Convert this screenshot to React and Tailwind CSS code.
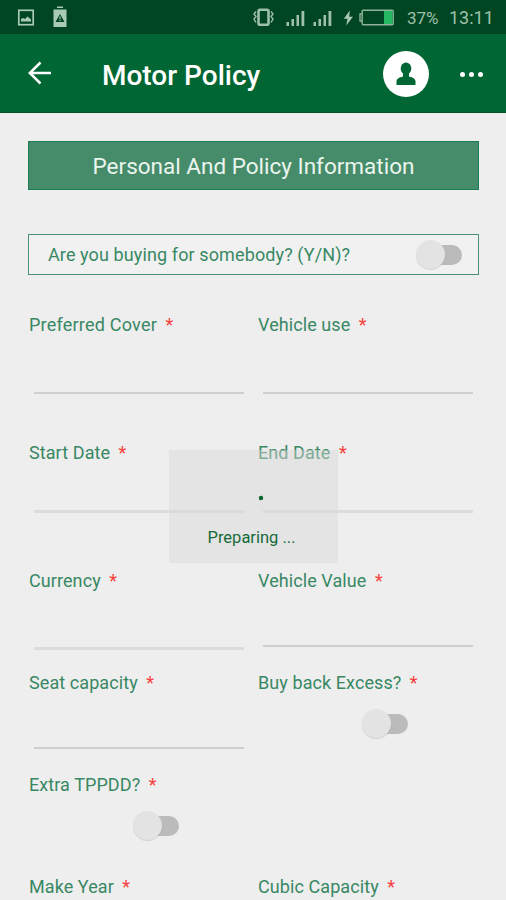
import React from "react";

const rows = [
  {
    height: "h-[128px]",
    fields: [
      { label: "Preferred Cover", tracking: "tracking-[0.22px]", line: "mt-[57px] h-[2px] bg-[#cfcfcf]" },
      { label: "Vehicle use", line: "mt-[57px] h-[2px] bg-[#d0d0d0]" },
    ],
  },
  {
    height: "h-[128px]",
    fields: [
      { label: "Start Date", line: "mt-[47px] h-[3px] bg-[#dcdcdc]" },
      { label: "End Date", line: "mt-[47px] h-[3px] bg-[#dcdcdc]" },
    ],
  },
  {
    height: "h-[102px]",
    fields: [
      { label: "Currency", line: "mt-[56px] h-[3px] bg-[#dcdcdc]" },
      { label: "Vehicle Value", line: "mt-[54px] h-[2px] bg-[#cfcfcf]" },
    ],
  },
  {
    height: "h-[102px]",
    fields: [
      { label: "Seat capacity", line: "mt-[54px] h-[2px] bg-[#cecece]" },
      { label: "Buy back Excess?", toggle: true },
    ],
  },
  {
    height: "h-[102px]",
    fields: [{ label: "Extra TPPDD?", toggle: true }],
  },
  {
    height: "h-[24px]",
    fields: [{ label: "Make Year" }, { label: "Cubic Capacity" }],
  },
];

function Toggle() {
  return (
    <div className="flex h-[29px] w-[46px] shrink-0 items-center">
      <div className="z-10 size-[29px] shrink-0 rounded-full bg-[#e3e3e3] shadow-[0_1px_1px_rgba(0,0,0,0.12)]" />
      <div className="-ml-[19px] h-5 w-9 shrink-0 rounded-full bg-[#bbbbbb]" />
    </div>
  );
}

function Field({ label, line, toggle, tracking = "tracking-[0.08px]" }) {
  return (
    <div>
      <div className="flex h-[21px] items-center whitespace-nowrap text-[18px] leading-[21px] text-[#388864]">
        <span className={tracking}>{label}</span>
        <span className="ml-[8.5px] text-[#f5403c]">*</span>
      </div>
      {line && <div className={`mx-[5px] ${line}`} />}
      {toggle && (
        <div className="ml-[104px] mt-[16px]">
          <Toggle />
        </div>
      )}
    </div>
  );
}

function Signal() {
  return (
    <svg width="19" height="17" viewBox="0 0 19 17" fill="#9fc0a9">
      <rect x="0.5" y="12" width="2.5" height="4" />
      <rect x="5.5" y="9" width="2.5" height="7" />
      <rect x="10.5" y="5" width="2.5" height="11" />
      <rect x="15.5" y="1" width="2.8" height="15" />
    </svg>
  );
}

function StatusBar() {
  return (
    <div className="flex h-[34px] items-center bg-[#004622] pt-[2px] text-[#9fc0a9]">
      <svg className="ml-[17px]" width="18" height="18" viewBox="0 0 18 18">
        <rect x="1.8" y="1.3" width="14.4" height="14.4" fill="none" stroke="#a9cbb4" strokeWidth="1.7" />
        <path d="M4 12.5V10L6 9L8 10L10.5 7.5L14 10.5V12.5Z" fill="#a9cbb4" />
      </svg>
      <svg className="ml-[17px] -mt-[2px]" width="16" height="22" viewBox="0 0 16 22">
        <path d="M5 0.5H11V2H5ZM1.5 3.5H14.5V21H1.5Z" fill="#a9cbb4" />
        <path d="M8 8L12.5 16H3.5Z" fill="#004622" />
        <path d="M8 10.5V13.2M8 14V15" stroke="#a9cbb4" strokeWidth="1.2" />
      </svg>
      <svg className="ml-[185px]" width="21" height="20" viewBox="0 0 21 20" fill="none" stroke="#9fc0a9">
        <rect x="5.5" y="1.7" width="10" height="15" rx="1.5" strokeWidth="2.6" />
        <path d="M3 3.5L1 6L3 8.5L1 11L3 14.5M18 3.5L20 6L18 8.5L20 11L18 14.5" strokeWidth="1.4" />
      </svg>
      <div className="ml-[12px] flex gap-2">
        <Signal />
        <Signal />
      </div>
      <svg className="-mt-px ml-[11px]" width="11" height="16" viewBox="0 0 11 16">
        <path d="M6.8 0.5L0.8 8.7H4.5L3.2 15.5L10 6.8H6.2Z" fill="#a9cbb4" />
      </svg>
      <svg className="-mt-[2px] ml-[5px]" width="36" height="17" viewBox="0 0 36 17">
        <path d="M3.5 5H1V12H3.5" fill="none" stroke="#8fb39a" strokeWidth="1.4" />
        <rect x="3.2" y="1.2" width="31" height="14.6" rx="1" fill="none" stroke="#8fb39a" strokeWidth="1.4" />
        <rect x="25" y="2" width="8.5" height="13" fill="#27b864" />
      </svg>
      <span className="ml-[12px] w-[42px] whitespace-nowrap text-[17px] leading-5">37%</span>
      <span className="whitespace-nowrap text-[18px] leading-5">13:11</span>
    </div>
  );
}

function AppBar() {
  return (
    <div className="flex h-[79px] items-center border-b border-[#08501f] bg-[#006633] text-white">
      <svg className="ml-[27px]" width="26" height="24" viewBox="0 0 26 24" fill="none" stroke="white" strokeWidth="2.5">
        <path d="M13.5 1.5L2.8 12L13.5 22.5M2.8 12H24" />
      </svg>
      <h1 className="ml-[49px] w-[281px] whitespace-nowrap pt-[5px] text-[28px] font-medium leading-8">Motor Policy</h1>
      <div className="mt-[2px] flex size-[46px] shrink-0 items-center justify-center rounded-full bg-white">
        <svg width="22" height="24" viewBox="0 0 22 24" fill="#006633">
          <ellipse cx="11" cy="6.5" rx="5.3" ry="6" />
          <path d="M8 11H14V14.5C18 15.5 20.5 17 20.5 19.5V23H1.5V19.5C1.5 17 4 15.5 8 14.5Z" />
        </svg>
      </div>
      <div className="ml-[30.5px] flex gap-[4px] pt-[2px]">
        <i className="size-[5px] rounded-full bg-white" />
        <i className="size-[5px] rounded-full bg-white" />
        <i className="size-[5px] rounded-full bg-white" />
      </div>
    </div>
  );
}

export default function App() {
  return (
    <div className="relative h-[900px] w-[506px] overflow-hidden bg-[#eeeeee] font-['Roboto',sans-serif]">
      <StatusBar />
      <AppBar />

      <main className="px-[28px] pt-[28px]">
        <div className="flex h-[49px] w-[451px] items-center justify-center border border-[#1b7c55] bg-[#468c6a] pt-[3px] text-[22.5px] text-[#eaf5ee]">
          Personal And Policy Information
        </div>

        <div className="mt-[44px] flex h-[41px] w-[451px] items-center justify-between border border-[#4b9274] bg-[#f1f1f1] pl-[19px] pr-4 text-[18px] tracking-[0.11px] text-[#388864]">
          <span>Are you buying for somebody? (Y/N)?</span>
          <Toggle />
        </div>

        <div className="ml-px mt-[39px]">
          {rows.map((row, i) => (
            <div key={i} className={`grid grid-cols-[220px_220px] gap-x-[9px] ${row.height}`}>
              {row.fields.map((f) => (
                <Field key={f.label} {...f} />
              ))}
            </div>
          ))}
        </div>
      </main>

      {/* Loading overlay */}
      <div className="absolute left-[169px] top-[450px] z-20 flex h-[113px] w-[169px] flex-col items-center bg-[#d6d6d6]/45">
        <div className="ml-[15px] mt-[46px] size-[4px] -rotate-12 rounded-[1px] bg-[#08682f]" />
        <span className="ml-[-4px] mt-[28px] text-[16.5px] leading-5 text-[#176b3b]">Preparing ...</span>
      </div>
    </div>
  );
}
